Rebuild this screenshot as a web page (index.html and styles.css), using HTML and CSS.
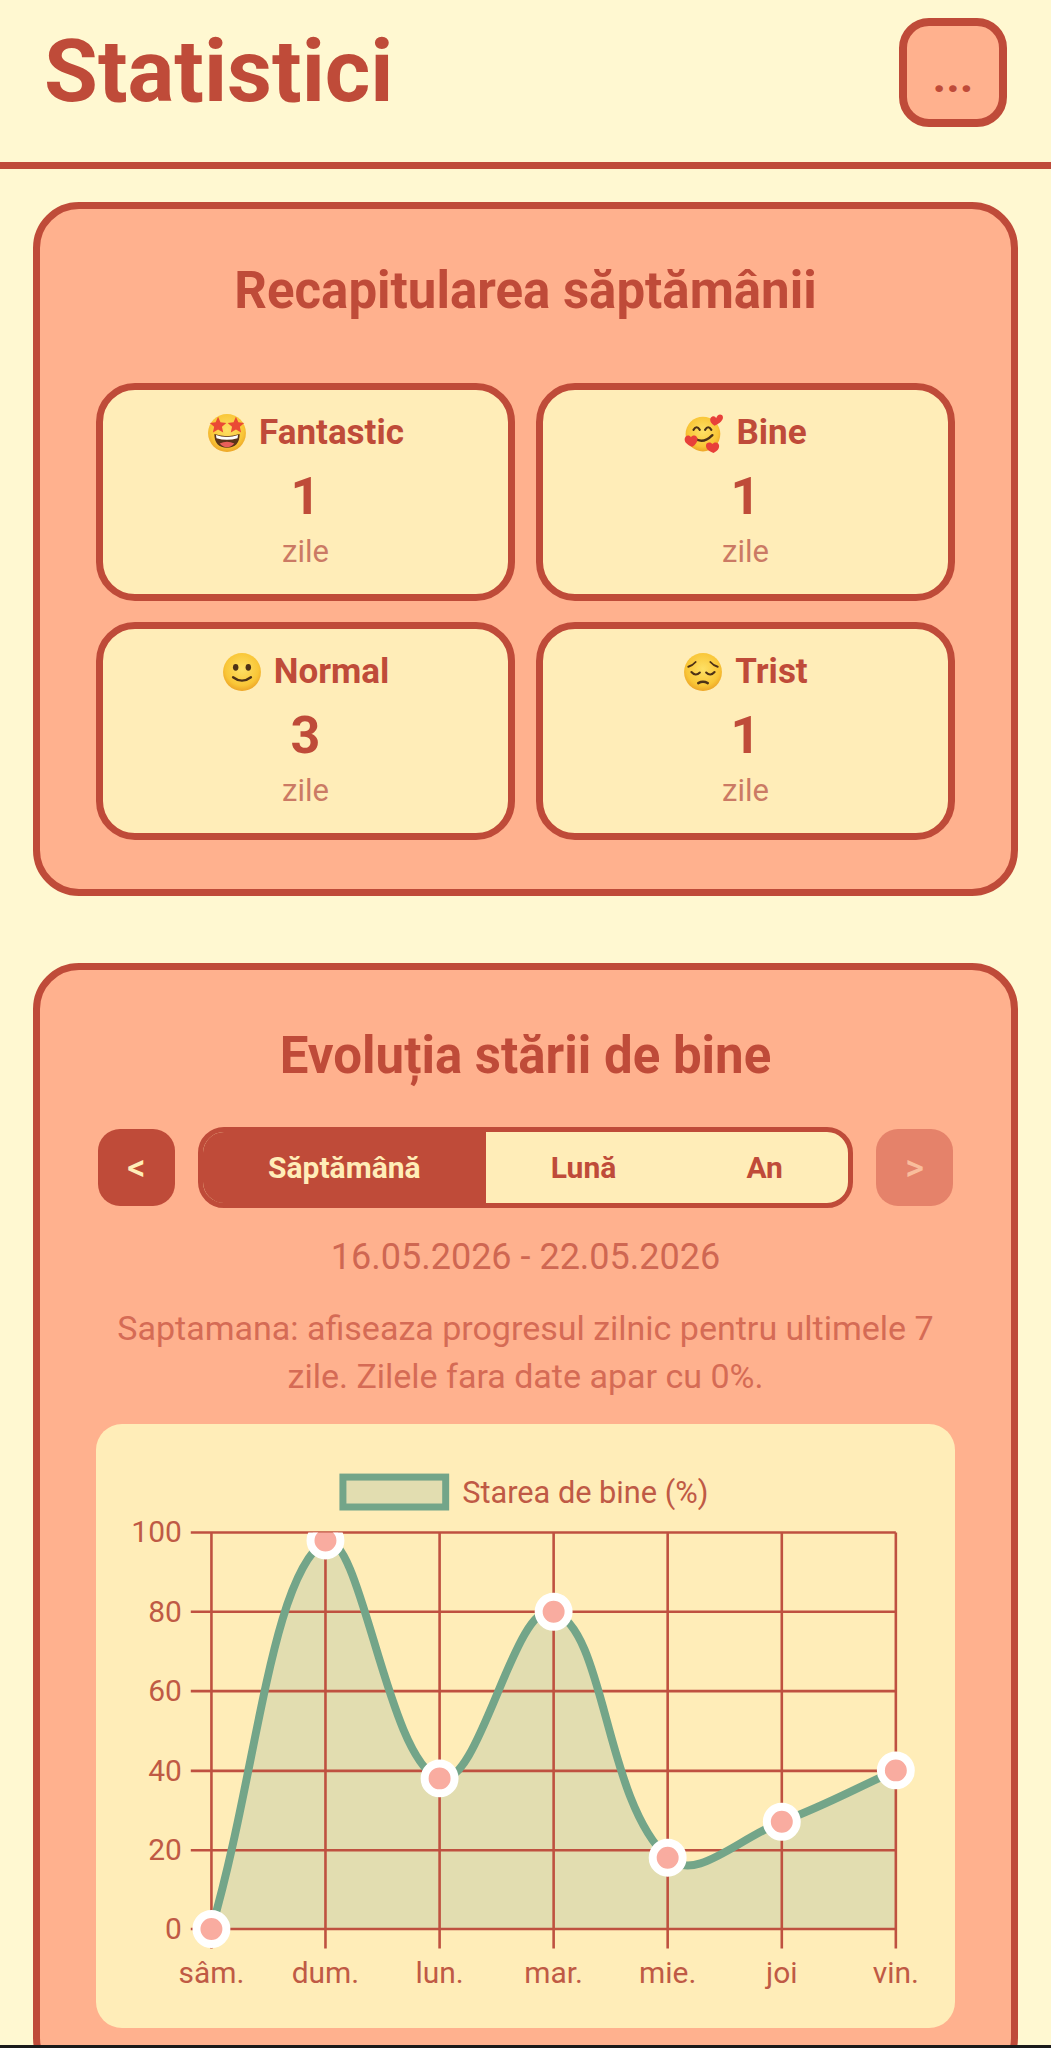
FILE: index.html
```html
<!DOCTYPE html>
<html lang="ro">
<head>
  <meta charset="UTF-8" />
  <meta name="viewport" content="width=device-width, initial-scale=1.0"/>
  <title>Statistici</title>
  <link rel="stylesheet" href="styles.css">
</head>
<body>
  <div class="page">

    <header class="top-bar">
      <h1>Statistici</h1>
      <button class="menu-btn">...</button>
    </header>

    <main class="content">

      <section class="card">
        <h2>Recapitularea săptămânii</h2>
        <div class="stat-grid">

          <div class="stat-card">
            <div class="stat-label">
              <svg class="emoji" viewBox="0 0 38 38">
                <defs>
                  <radialGradient id="face" cx="50%" cy="42%" r="58%">
                    <stop offset="0" stop-color="#fde066"/>
                    <stop offset="0.75" stop-color="#f9c637"/>
                    <stop offset="1" stop-color="#eda628"/>
                  </radialGradient>
                </defs>
                <circle cx="19" cy="19" r="18" fill="url(#face)"/>
                <path d="M7 20 Q19 24 31 20 Q31 33 19 33 Q7 33 7 20Z" fill="#5b3418"/>
                <path d="M8.5 21 Q19 24.5 29.5 21 L29 24 Q19 27 9 24Z" fill="#fff"/>
                <path d="M12 29 Q19 25.5 26 29 Q23 32.5 19 32.5 Q15 32.5 12 29Z" fill="#e8605a"/>
                <polygon points="10.5,3.5 12.8,8.8 18.4,9.4 14.2,13 15.4,18.6 10.5,15.7 5.6,18.6 6.8,13 2.6,9.4 8.2,8.8" fill="#ea4a35"/>
                <polygon points="27.5,3.5 29.8,8.8 35.4,9.4 31.2,13 32.4,18.6 27.5,15.7 22.6,18.6 23.8,13 19.6,9.4 25.2,8.8" fill="#ea4a35"/>
              </svg>
              <span>Fantastic</span>
            </div>
            <div class="stat-value">1</div>
            <div class="stat-unit">zile</div>
          </div>

          <div class="stat-card">
            <div class="stat-label">
              <svg class="emoji" viewBox="0 0 38 38">
                <circle cx="18" cy="20" r="16.5" fill="url(#face)"/>
                <path d="M9 16 Q12 11 15 16 M20 16 Q23 11 26 16" fill="none" stroke="#4d3116" stroke-width="2" stroke-linecap="round"/>
                <path d="M10 24 Q18 30 27 21" fill="none" stroke="#4d3116" stroke-width="2.2" stroke-linecap="round"/>
                <path d="M29 12 C24 9 24 5 26.5 3.5 C28.5 2.5 30 3.5 30.5 5 C31.5 2.5 33.5 0.5 36 2 C38.5 4 36.5 9 29 12Z" fill="#e8403a"/>
                <path d="M8 32 C2 30 -1 26 1.5 22.5 C3.2 20.8 5.6 21.4 6.6 23 C7.6 21.2 10.5 20.8 12 22.6 C14 25.5 12 29.5 8 32Z" fill="#e8403a"/>
                <path d="M28 38 C22 36 19.5 32 21.5 29 C23.2 27.3 26 27.8 27 29.5 C28 27.8 31 27.3 32.5 29 C34.8 32 32.5 36 28 38Z" fill="#e8403a"/>
              </svg>
              <span>Bine</span>
            </div>
            <div class="stat-value">1</div>
            <div class="stat-unit">zile</div>
          </div>

          <div class="stat-card">
            <div class="stat-label">
              <svg class="emoji" viewBox="0 0 38 38">
                <circle cx="19" cy="19" r="18" fill="url(#face)"/>
                <ellipse cx="13" cy="14.5" rx="2.6" ry="3.2" fill="#4d3116"/>
                <ellipse cx="25" cy="14.5" rx="2.6" ry="3.2" fill="#4d3116"/>
                <path d="M10.5 24 Q19 30.5 27.5 24" fill="none" stroke="#4d3116" stroke-width="2.2" stroke-linecap="round"/>
              </svg>
              <span>Normal</span>
            </div>
            <div class="stat-value">3</div>
            <div class="stat-unit">zile</div>
          </div>

          <div class="stat-card">
            <div class="stat-label">
              <svg class="emoji" viewBox="0 0 38 38">
                <circle cx="19" cy="19" r="18" fill="url(#face)"/>
                <path d="M5 14 Q9 13 12 9.5 M33 14 Q29 13 26 9.5" fill="none" stroke="#4d3116" stroke-width="1.8" stroke-linecap="round"/>
                <path d="M8 19 Q12 23.5 16 19.5 M22 19.5 Q26 23.5 30 19" fill="none" stroke="#4d3116" stroke-width="2" stroke-linecap="round"/>
                <path d="M14.5 29.5 Q19 27 23.5 29.5" fill="none" stroke="#4d3116" stroke-width="2.4" stroke-linecap="round"/>
              </svg>
              <span>Trist</span>
            </div>
            <div class="stat-value">1</div>
            <div class="stat-unit">zile</div>
          </div>

        </div>
      </section>

      <section class="card card-chart">
        <h2>Evoluția stării de bine</h2>

        <div class="range-row">
          <button class="nav-btn">&lt;</button>
          <div class="tabs">
            <button class="tab active">Săptămână</button>
            <button class="tab">Lună</button>
            <button class="tab">An</button>
          </div>
          <button class="nav-btn off">&gt;</button>
        </div>

        <p class="range-date">16.05.2026 - 22.05.2026</p>
        <p class="range-note">Saptamana: afiseaza progresul zilnic pentru ultimele 7 zile. Zilele fara date apar cu 0%.</p>

        <div class="chart-box">
          <svg class="chart" viewBox="0 0 861 604">
            <defs>
              <clipPath id="plotClip"><rect x="0" y="108" width="861" height="496"/></clipPath>
            </defs>

            <!-- legend -->
            <rect class="legend-box" x="247.5" y="52.5" width="103" height="30"/>
            <text class="legend-text" x="367" y="78">Starea de bine (%)</text>

            <path class="area" clip-path="url(#plotClip)" d="M115.7 505.5C161.4 349.7 174.6 152.6 230 116C266.1 108 292.6 338.3 344.4 354.5C384.1 366.9 419.7 173.9 458.7 187.5C511.1 205.7 509.5 375.6 573 434C601 459.8 642.7 415.1 687.4 398C734.2 380.1 756 367.1 801.7 346.5V505.5Z"/>

            <g class="grid">
              <path d="M95 108H801.7"/>
              <path d="M95 187.5H801.7"/>
              <path d="M95 267H801.7"/>
              <path d="M95 347H801.7"/>
              <path d="M95 426.5H801.7"/>
              <path d="M95 505.5H801.7"/>
              <path d="M115.7 108V525"/>
              <path d="M230 108V525"/>
              <path d="M344.4 108V525"/>
              <path d="M458.7 108V525"/>
              <path d="M573 108V525"/>
              <path d="M687.4 108V525"/>
              <path d="M801.7 108V525"/>
            </g>

            <g class="axis-y">
              <text x="86" y="118">100</text>
              <text x="86" y="197.5">80</text>
              <text x="86" y="277">60</text>
              <text x="86" y="357">40</text>
              <text x="86" y="436.5">20</text>
              <text x="86" y="515.5">0</text>
            </g>
            <g class="axis-x">
              <text x="115.7" y="560">sâm.</text>
              <text x="230" y="560">dum.</text>
              <text x="344.4" y="560">lun.</text>
              <text x="458.7" y="560">mar.</text>
              <text x="573" y="560">mie.</text>
              <text x="687.4" y="560">joi</text>
              <text x="801.7" y="560">vin.</text>
            </g>

            <g clip-path="url(#plotClip)">
              <path class="line" d="M115.7 505.5C161.4 349.7 174.6 152.6 230 116C266.1 108 292.6 338.3 344.4 354.5C384.1 366.9 419.7 173.9 458.7 187.5C511.1 205.7 509.5 375.6 573 434C601 459.8 642.7 415.1 687.4 398C734.2 380.1 756 367.1 801.7 346.5"/>
              <circle class="dot" cx="115.7" cy="505.5" r="15"/>
              <circle class="dot" cx="230" cy="116" r="15"/>
              <circle class="dot" cx="344.4" cy="354.5" r="15"/>
              <circle class="dot" cx="458.7" cy="187.5" r="15"/>
              <circle class="dot" cx="573" cy="434" r="15"/>
              <circle class="dot" cx="687.4" cy="398" r="15"/>
              <circle class="dot" cx="801.7" cy="346.5" r="15"/>
            </g>
          </svg>
        </div>
      </section>

    </main>
  </div>

  <div class="screen-edge"></div>
</body>
</html>
```

FILE: styles.css
```css
* {
  margin: 0;
  padding: 0;
  box-sizing: border-box;
  font-family: 'Roboto', sans-serif;
}

html, body {
  height: 100%;
  overflow: hidden;
}

body {
  background: #fff8d1;
  color: #bf4b39;
}

.page {
  height: 100vh;
  overflow: hidden;
}

.top-bar {
  height: 169px;
  padding: 18px 44px 0 44px;
  border-bottom: 7px solid #bf4b39;
  display: flex;
  justify-content: space-between;
  align-items: flex-start;
}

.top-bar h1 {
  font-size: 87.5px;
  font-weight: 700;
  line-height: 106px;
}

.menu-btn {
  width: 108px;
  height: 109px;
  border: 8px solid #bf4b39;
  border-radius: 30px;
  background: #ffb18e;
  color: #bf4b39;
  font-size: 47px;
  font-weight: 700;
  line-height: 1;
  padding-top: 6px;
}

.content {
  padding: 33px;
  display: flex;
  flex-direction: column;
  gap: 67px;
}

.card {
  background: #ffb18e;
  border: 7px solid #bf4b39;
  border-radius: 46px;
  padding: 55px 56px 49px;
}

.card-chart {
  padding-top: 59px;
}

.card h2 {
  font-size: 51px;
  font-weight: 700;
  line-height: 54px;
  text-align: center;
}

.stat-grid {
  margin-top: 65px;
  display: grid;
  grid-template-columns: 1fr 1fr;
  gap: 21px;
}

.stat-card {
  height: 218px;
  padding-top: 22px;
  background: #ffedb8;
  border: 7px solid #bf4b39;
  border-radius: 39px;
  text-align: center;
}

.stat-label {
  display: flex;
  justify-content: center;
  align-items: center;
  gap: 12px;
  font-size: 35px;
  font-weight: 700;
  line-height: 42px;
}

.emoji {
  width: 40px;
  height: 40px;
}

.stat-value {
  margin-top: 11px;
  font-size: 52px;
  font-weight: 700;
  line-height: 64px;
}

.stat-unit {
  margin-top: 4px;
  font-size: 31px;
  line-height: 38px;
  color: #cb7a64;
}

.range-row {
  margin-top: 44px;
  padding: 0 2px;
  display: flex;
  align-items: center;
  gap: 23px;
}

.nav-btn {
  width: 77px;
  height: 77px;
  flex: none;
  border: none;
  border-radius: 22px;
  background: #bf4b39;
  color: #ffedb8;
  font-size: 36px;
  font-weight: 500;
}

.nav-btn.off {
  background: #e5826a;
  color: #f9bd9c;
}

.tabs {
  flex: 1;
  height: 81px;
  display: flex;
  border: 5px solid #bf4b39;
  border-radius: 26px;
  background: #ffedb8;
  overflow: hidden;
}

.tab {
  flex: 1 1 auto;
  border: none;
  background: transparent;
  color: #bf4b39;
  font-size: 30px;
  font-weight: 700;
}

.tab.active {
  background: #bf4b39;
  color: #ffedb8;
}

.range-date {
  margin-top: 26px;
  font-size: 36px;
  line-height: 46px;
  text-align: center;
  color: #cf6752;
}

.range-note {
  margin-top: 24px;
  font-size: 34px;
  line-height: 48px;
  text-align: center;
  color: #d56b55;
}

.chart-box {
  margin-top: 24px;
  height: 604px;
  background: #ffedb8;
  border-radius: 26px;
}

.chart {
  display: block;
  width: 100%;
  height: 100%;
}

.chart text {
  font-family: 'Roboto', sans-serif;
  font-size: 30px;
  fill: #bf5a45;
}

.chart .legend-text {
  font-size: 30.8px;
}

.legend-box {
  fill: #e2ddb0;
  stroke: #73a589;
  stroke-width: 7;
}

.grid path {
  fill: none;
  stroke: #bf5140;
  stroke-width: 2.6;
}

.axis-y text {
  text-anchor: end;
}

.axis-x text {
  text-anchor: middle;
}

.area {
  fill: #e2ddb0;
}

.line {
  fill: none;
  stroke: #73a589;
  stroke-width: 8;
}

.dot {
  fill: #f9aca0;
  stroke: #fff;
  stroke-width: 8;
}

.screen-edge {
  position: fixed;
  left: 0;
  right: 0;
  bottom: 0;
  height: 3px;
  background: #1a1a1a;
}
```
